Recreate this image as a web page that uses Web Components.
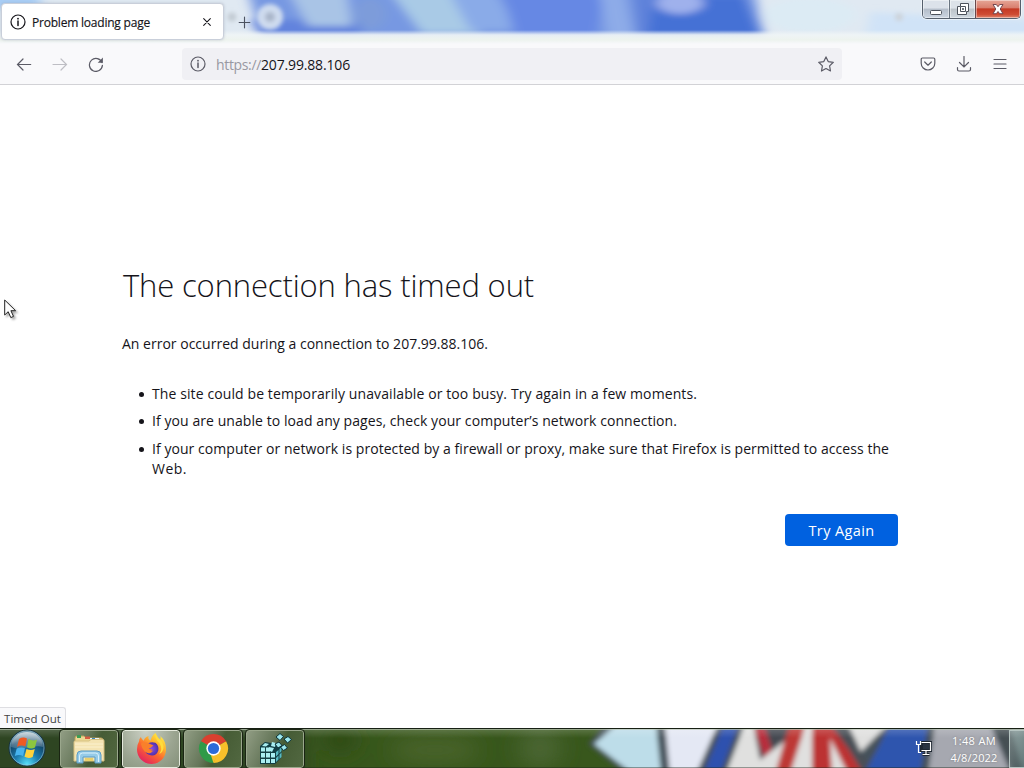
<!DOCTYPE html>
<html lang="en">
<head>
<meta charset="utf-8">
<title>Problem loading page</title>
<style>
html,body{margin:0;height:100%;overflow:hidden;background:#fff;font-family:"Open Sans","Noto Sans",sans-serif}
</style>
</head>
<body>
<desktop-screen></desktop-screen>
<script>
const define = (name, html, after) => customElements.define(name, class extends HTMLElement {
  constructor() {
    super();
    const t = document.createElement('template');
    t.innerHTML = html;
    this.attachShadow({mode: 'open'}).append(t.content.cloneNode(true));
  }
  connectedCallback() { if (after) after.call(this); }
});

// Single line of text, tracked so that it fills the width given in "w".
define('fit-text', `<style>:host{display:block;white-space:nowrap;width:max-content}span{display:inline-block}</style><span><slot></slot></span>`, function () {
  const span = this.shadowRoot.querySelector('span');
  const target = +this.getAttribute('w');
  const n = this.textContent.length;
  const natural = span.getBoundingClientRect().width;
  if (target && n) span.style.letterSpacing = ((target - natural) / n) + 'px';
});

define('glass-backdrop', `<style>:host{display:block;position:absolute;inset:0;overflow:hidden}svg{display:block}</style>
<svg width="1024" height="44" viewBox="0 0 1024 44">
<defs><filter id="b" x="-5%" y="-50%" width="110%" height="200%"><feGaussianBlur stdDeviation="6 3"/></filter>
<filter id="s" x="-20%" y="-50%" width="140%" height="200%"><feGaussianBlur stdDeviation="2"/></filter>
<linearGradient id="f" x1="0" x2="0" y1="0" y2="1"><stop offset="0" stop-color="#f0f5f6" stop-opacity="0"/><stop offset=".35" stop-color="#f0f5f6" stop-opacity=".9"/><stop offset=".7" stop-color="#edf3ee"/><stop offset="1" stop-color="#f8f9fc"/></linearGradient></defs>
<rect width="1024" height="44" fill="#e0e9f2"/>
<g filter="url(#b)">
<rect x="-20" y="-10" width="60" height="18" fill="#a8cdf5"/>
<path d="M244-20H752L765 38H262Z" fill="#7798e2"/>
<path d="M250 20H360V38H262Z" fill="#6283dd"/>
<path d="M285-15H345L352 26H308Z" fill="#a9c4e6"/>
<ellipse cx="370" cy="14" rx="16" ry="16" fill="#7d9cda"/>
<path d="M385-15H445L480 33H422Z" fill="#a9cae6"/>
<path d="M445-15H490L520 30H470Z" fill="#8aabe8"/>
<path d="M500-15H606L596 36H515Z" fill="#6688e4"/>
<path d="M598-15H622L634 38H608Z" fill="#8eace8"/>
<path d="M632-15H650L660 36H638Z" fill="#5f82da"/>
<path d="M654-5H744L760 36H648Z" fill="#4571d5"/>
<ellipse cx="680" cy="3" rx="24" ry="11" fill="#9fb1ec"/>
<ellipse cx="810" cy="15" rx="46" ry="17" fill="#dcebf4"/>
<path d="M870 12L1040 20V40H865Z" fill="#d0e3f7"/>
</g>
<g filter="url(#s)"><circle cx="270" cy="17" r="13" fill="#cfdcef"/><circle cx="270" cy="17" r="5" fill="#a9b5c9"/><circle cx="232" cy="17" r="4.500" fill="#c2cbd3"/><circle cx="899" cy="17" r="4" fill="#cdd3da"/></g>
<rect y="30" width="1024" height="14" fill="url(#f)"/>
</svg>`);

define('window-controls', `<style>:host{position:absolute;right:3px;top:0;display:flex;height:18px;width:97px;border:1px solid #56606d;border-top:0;border-radius:0 0 5px 5px;overflow:hidden;box-shadow:0 0 0 1px #ffffff80}
div{display:flex;align-items:center;justify-content:center;box-shadow:inset 0 0 0 1px #ffffff70}
.m{width:26px;background:linear-gradient(#dce2ea 0 45%,#b4bdc9 50%,#cbd5e1);border-right:1px solid #697480}.m svg{margin-top:2px}.r{width:25px;background:linear-gradient(#dce2e8 0 45%,#bcc3c9 50%,#cfd8df);border-right:1px solid #69494c}.c{flex:1;background:linear-gradient(#e6a697,#d9806f 42%,#c43a24 50%,#cf4c33 80%,#df866c)}
svg{display:block}</style>
<div class="m"><svg width="14" height="14" viewBox="0 0 14 14"><rect x="1.5" y="7.5" width="11" height="4" rx="1" fill="#fff" stroke="#4c525b"/></svg></div>
<div class="r"><svg width="14" height="14" viewBox="0 0 14 14"><path d="M4.5 1.5H12.5V9.500H10.500V12.500H1.500V4.500H4.500Z" fill="#fff" stroke="#4c525b"/><path d="M4.500 4.500H9.500V9.500H4.500Z" fill="#fff" stroke="#4c525b"/><path d="M6 6h2v2H6z" fill="#6e747c"/></svg></div>
<div class="c"><svg width="14" height="14" viewBox="0 0 14 14"><path d="M2 2.500H5.300L7 4.700 8.700 2.500H12L9.200 7 12 11.700H8.700L7 9.500 5.300 11.700H2L4.800 7Z" fill="#fff" stroke="#693c45" stroke-width=".9"/></svg></div>`);

const icons = {
  info: '<circle cx="8" cy="8" r="7"/><path d="M8 7v4.500" stroke-width="1.500"/><circle cx="8" cy="4.700" r=".9" fill="currentColor" stroke="none"/>',
  close: '<path d="M4.200 4.200l7.600 7.600M11.800 4.200l-7.600 7.600"/>',
  plus: '<path d="M8 2.300v11.400M2.300 8h11.400"/>',
  back: '<path d="M14.700 8.500H1.500M7 3L1.500 8.500 7 14"/>',
  forward: '<path d="M1 8.500h13.500M9 3L14.500 8.500 9 14"/>',
  reload: '<path d="M14 6.600A6.500 6.500 0 1 0 14.400 9.400"/><path d="M14.900 1.600v5.200H9.700z" fill="currentColor" stroke="none"/>',
  star: '<path d="M8 .9l2.200 4.700 5.100.7-3.700 3.600.9 5.100L8 12.500 3.500 15l.9-5.100L.7 6.300l5.100-.7z" stroke-linejoin="round"/>',
  pocket: '<path d="M2.400 2h11.200c.7 0 1.200.5 1.200 1.200v4A6.800 6.800 0 0 1 1.200 7.200v-4C1.200 2.500 1.700 2 2.400 2zM4.700 6L8 9.200 11.300 6" stroke-linejoin="round"/>',
  download: '<path d="M8 .5v10.300M3.500 6.500L8 10.900l4.500-4.400M1.500 11.500v2c0 .9.600 1.500 1.500 1.500h10c.9 0 1.500-.6 1.500-1.500v-2"/>',
  menu: '<path d="M2 3.500h12M2 8h12M2 12.500h12"/>'
};
define('line-icon', `<style>:host{display:block;width:16px;height:16px;flex:none}svg{display:block;width:100%;height:100%;fill:none;stroke:currentColor;stroke-width:1.200;stroke-linecap:round}</style><svg viewBox="0 0 16 16"></svg>`, function () {
  this.shadowRoot.querySelector('svg').innerHTML = icons[this.getAttribute('name')];
});

define('tab-strip', `<style>:host{display:flex;position:relative;height:44px;box-sizing:border-box;padding:3px 0 0 1px;align-items:flex-start}
.tab{position:relative;display:flex;align-items:center;box-sizing:border-box;width:223px;height:37px;padding:0 9px 0 8px;background:#fff;border-radius:4px;border:1px solid #c9cfda;box-shadow:0 0 3px #8089a060;color:#15141a;font-size:12px;line-height:18px}
fit-text{margin:3px 0 0 6px;flex:1;-webkit-text-stroke:.15px}.x{width:14px;height:14px}.plus{position:relative;margin:12px 0 0 13px;color:#4c5361;width:15px;height:15px}</style>
<glass-backdrop></glass-backdrop>
<div class="tab"><line-icon name="info"></line-icon><fit-text w="118">Problem loading page</fit-text><line-icon class="x" name="close"></line-icon></div>
<line-icon class="plus" name="plus"></line-icon><window-controls></window-controls>`);

define('nav-bar', `<style>:host{display:flex;align-items:center;height:40px;box-sizing:border-box;background:#f9f9fb;padding:0 16px;box-shadow:0 1px #d2d2d6;color:#5b5b66;position:relative}
.url{display:flex;align-items:center;box-sizing:border-box;height:32px;margin-left:78px;padding:0 8px;width:660px;background:#f0f0f4;border-radius:4px;font-size:14px;line-height:20px}
.f{margin-left:20px;color:#bebec4}.r{margin-left:20px}.url fit-text{margin:2px 0 0}.p{margin-left:10px!important;color:#9898a2}.h{color:#15141a}.s{margin-left:auto}.k{margin-left:78px}.d{margin:0 20px}</style>
<line-icon name="back"></line-icon><line-icon class="f" name="forward"></line-icon><line-icon class="r" name="reload"></line-icon>
<div class="url"><line-icon name="info"></line-icon><fit-text class="p" w="45">https://</fit-text><fit-text class="h" w="89">207.99.88.106</fit-text><line-icon class="s" name="star"></line-icon></div>
<line-icon class="k" name="pocket"></line-icon><line-icon class="d" name="download"></line-icon><line-icon name="menu"></line-icon>`);

define('error-page', `<style>:host{display:block;flex:1;box-sizing:border-box;padding:177px 126px 0 122px;color:#15141a;font-size:14px;line-height:20px;background:#fff}
h1{margin:0;padding-left:1px;font-size:31px;font-weight:300;line-height:48px}.intro{margin-top:25px}
ul{margin:30px 0 0;padding:0 0 0 30px;list-style:none;display:flex;flex-direction:column}
li{position:relative}li+li{margin-top:7px}li+li+li{margin-top:8px}li::before{content:"";position:absolute;left:-13px;top:8px;width:5px;height:5px;border-radius:50%;background:#15141a}
footer{display:flex;justify-content:flex-end;margin-top:35px}button{font:14.500px/20px "Open Sans","Noto Sans",sans-serif;color:#fff;background:#0061e0;border:0;border-radius:4px;width:113px;height:32px;padding:1px 0 0;display:flex;justify-content:center;align-items:center}</style>
<h1><fit-text w="411">The connection has timed out</fit-text></h1>
<fit-text class="intro" w="366">An error occurred during a connection to 207.99.88.106.</fit-text>
<ul><li><fit-text w="545">The site could be temporarily unavailable or too busy. Try again in a few moments.</fit-text></li>
<li><fit-text w="525">If you are unable to load any pages, check your computer’s network connection.</fit-text></li>
<li><fit-text w="737">If your computer or network is protected by a firewall or proxy, make sure that Firefox is permitted to access the</fit-text><fit-text w="35">Web.</fit-text></li></ul>
<footer><button><fit-text w="66">Try Again</fit-text></button></footer>`);

define('status-tip', `<style>:host{position:absolute;left:0;bottom:0;box-sizing:border-box;height:21px;width:66px;padding:2px 0 0 4px;background:#f9f9fb;border:1px solid #dedee2;border-left:0;border-bottom:0;border-radius:0 3px 0 0;font-size:11.500px;line-height:18px;color:#444}</style><fit-text w="57">Timed Out</fit-text>`);

define('mouse-pointer', `<style>:host{position:absolute;left:4px;top:299px;filter:drop-shadow(2px 2px 1px #0005)}svg{display:block}</style><svg width="13" height="20" viewBox="0 0 13 20"><path d="M.7 1V16L4.200 12.700 6.800 18.600 9.500 17.400 6.900 11.700H11.600Z" fill="#fff" stroke="#222"/></svg>`);

define('start-orb', `<style>:host{display:block;width:38px;height:38px;margin-left:8px}svg{display:block}</style><svg width="38" height="38" viewBox="0 0 38 38">
<defs><radialGradient id="o" cx=".5" cy=".95" r=".95"><stop offset="0" stop-color="#57e0fb"/><stop offset=".35" stop-color="#1d7db0"/><stop offset=".7" stop-color="#124567"/><stop offset="1" stop-color="#6d94a8"/></radialGradient><linearGradient id="g" x1="0" x2="0" y1="0" y2="1"><stop offset="0" stop-color="#fff" stop-opacity=".7"/><stop offset="1" stop-color="#fff" stop-opacity=".15"/></linearGradient></defs>
<circle cx="19" cy="19" r="18" fill="url(#o)" stroke="#16303e"/><circle cx="19" cy="19" r="17" fill="none" stroke="#9ac8d8" stroke-opacity=".6"/><path d="M3 18C3 9 10 3 19 3S35 9 35 18C27 15 14 22 3 18Z" fill="url(#g)"/>
<path d="M11 10Q15 7.500 19 9.500L17.300 17.500Q13 15.500 9 18Z" fill="#ee5a24"/><path d="M20.500 10Q25 12.500 29 10.500L27 18.500Q23 20.500 19 18.200Z" fill="#8cc63f"/><path d="M8.700 19.500Q13 17.500 17 19.200L15 27Q11 25 6.800 27Z" fill="#47b3ee"/><path d="M18.500 20Q23 22 26.800 20L24.700 28Q20.500 30 16.500 27.800Z" fill="#ffd23c"/></svg>`);

define('task-button', `<style>:host{display:flex;box-sizing:border-box;width:58px;height:38px;align-items:center;justify-content:center;border:1px solid #9aa78c;outline:1px solid #1a2513;border-radius:3px;background:linear-gradient(115deg,#919d84,#66775a 40%,#465c35 58%,#526841)}:host([active]){background:radial-gradient(ellipse at 40% 0,#cbd0c4,#9ba591 60%,#85917a);border-color:#e4e9dc}</style><slot></slot>`);

define('folder-icon', `<style>:host,svg{display:block}</style><svg width="34" height="30" viewBox="0 0 34 30"><path d="M3 4Q3 2 5 2H12L14 4H29Q31 4 31 6V26H3Z" fill="#ecd793" stroke="#b99f5c"/><path d="M5 1h4v3H5z" fill="#3d9c54"/><path d="M13 2.500h5v2.500h-5z" fill="#d65d42"/><path d="M18 4h9v2h-9z" fill="#eef4f6"/><path d="M20 4h3v2h-3z" fill="#3b86bb"/><path d="M2 8Q2 7 3 7H17L19 5.500H31Q32 5.500 32 7V27H2Z" fill="#f4e4b3" stroke="#d6c182"/><path d="M3 10h28M3 13h28" stroke="#fbf1ce"/><path d="M5 29V21Q5 17 9 17H25Q29 17 29 21V29H23V23H11V29Z" fill="#96cbe8" stroke="#5b9bc4"/><path d="M7.500 28v-6q0-3 3-3h13q3 0 3 3v6" fill="none" stroke="#d9f1fc"/><path d="M13 24h8v3h-8z" fill="#ead06c"/></svg>`);

define('firefox-icon', `<style>:host,svg{display:block}</style><svg width="31" height="31" viewBox="0 0 32 32"><defs><linearGradient id="a" x1=".85" y1=".05" x2=".25" y2=".95"><stop offset="0" stop-color="#fff04a"/><stop offset=".3" stop-color="#ffb52c"/><stop offset=".6" stop-color="#fb682f"/><stop offset="1" stop-color="#e4245e"/></linearGradient><radialGradient id="p"><stop offset="0" stop-color="#8a50e0"/><stop offset="1" stop-color="#5130ad"/></radialGradient></defs>
<path d="M3 9Q3 6 5 4Q6 7 8 8Q9 4 13 3Q12 6 15 8Q16 3 20 0Q21 4 25 7Q26 4 25 3Q31 8 31 17A15 15 0 1 1 1 17Q1 12 3 9Z" fill="url(#a)"/><path d="M10 13Q14 8 20 10Q24 13 23 18Q21 24 15 23Q10 22 9 17Q14 21 17 17Q13 17 10 13Z" fill="url(#p)"/><path d="M5 11Q9 8 14 11L18 13Q15 16 13 16Q14 19 18 18Q14 23 9 19Q6 16 5 11Z" fill="#f9802b"/><path d="M20 0Q19 6 24 10Q28 16 24 22Q31 18 27 9Q22 5 20 0Z" fill="#ffdc3c"/></svg>`);

define('chrome-icon', `<style>:host,svg{display:block}</style><svg width="31" height="31" viewBox="-16 -16 32 32"><path d="M0 0L-13-7.500A15 15 0 0 1 13-7.500Z" fill="#d9402f"/><path d="M0 0L13-7.500A15 15 0 0 1 0 15L4 5Z" fill="#f7c02a"/><path d="M0 0L0 15A15 15 0 0 1-13-7.500L-6 3Z" fill="#2f9a48"/><path d="M0-7H13.300L13-7.500H0Z" fill="#d9402f"/><path d="M-6.100 3.500L-13-7.500 0 0Z" fill="#2f9a48"/><path d="M6.100 3.500L0 15-3 6Z" fill="#f7c02a"/><circle r="7.400" fill="#fff"/><circle r="5.800" fill="#2c6bd8"/></svg>`);

define('regedit-icon', `<style>:host,svg{display:block}</style><svg width="34" height="33" viewBox="0 0 34 33"><path d="M2 14L7 10 20 12 24 15 23 26 17 32H2Z" fill="#123f45"/><g fill="#a9eef2"><path d="M3 15.500h4v4H3zM8 15.500h4v4H8zM3 21h4v4.500H3zM8 21h4v4.500H8zM13 21h4v4.500h-4zM3 27h4v4H3zM8 27h4v4H8zM13 27h4v4h-4z"/><path d="M4 14l3-3 4 1-3 2.500zM14 10l4 1-1 4-4-1zM11 15l5 1-2 4-2-1z"/></g><g fill="#58b9c2"><path d="M18 20l2.500-2v4L18 24.500zM21.500 17l2-2v4l-2 2.500zM18 26l2.500-2.500v4L18 30z M21.500 22.500l2-2v4.500l-2 2z"/></g><g fill="#9be6eb" stroke="#0b3238"><path d="M18 5l4-3.500 3.500 3L22 8.500zM26 7l4-2.500 3.500 3-4 3.500zM22.500 15l4-2.500 3 3.500-4 2.500zM17 12l4-2 3 3.500-4 2.500z"/></g></svg>`);

define('taskbar-backdrop', `<style>:host{position:absolute;inset:0;overflow:hidden}svg{display:block}</style><svg width="1024" height="40" viewBox="0 0 1024 40"><defs><filter id="q" x="-5%" y="-40%" width="110%" height="180%"><feGaussianBlur stdDeviation="2.500"/></filter><filter id="w" x="-10%" y="-80%" width="120%" height="260%"><feGaussianBlur stdDeviation="10"/></filter><linearGradient id="t" x1="0" x2="0" y1="0" y2="1"><stop offset="0" stop-color="#fff" stop-opacity=".2"/><stop offset=".25" stop-color="#fff" stop-opacity="0"/></linearGradient></defs>
<rect width="1024" height="40" fill="#38571c"/>
<g filter="url(#w)"><rect x="-30" y="-30" width="335" height="100" fill="#2e4520"/><ellipse cx="435" cy="22" rx="45" ry="13" fill="#48642b"/><ellipse cx="540" cy="20" rx="22" ry="20" fill="#4a6532"/><ellipse cx="340" cy="12" rx="18" ry="12" fill="#2d4919"/></g>
<g filter="url(#q)"><path d="M588 16L606-5H1040V50H630Z" fill="#45515a"/><path d="M594 16L616-3H656L661 46H633Z" fill="#bddde9"/><path d="M665-4H718L696 46H670Z" fill="#e4e8f4"/><path d="M724-4H739L720 46H703Z" fill="#2f51af"/><path d="M745-4H888L850 35 865 48H725Z" fill="#e0e0df"/><path d="M753-4H806L760 32Z" fill="#454851"/><path d="M754 0L764 29 772 22 764-3Z" fill="#b92e3c"/><path d="M790-4H806L790 46H775L783 18Z" fill="#bd3734"/><path d="M812-4H834L868 46H848L830 10 832 46H812Z" fill="#bc3032"/><path d="M830-4H848L860 22 875 46H863L849 22Z" fill="#485057"/><path d="M890-4H928L920 46H864L878 20Z" fill="#2f54ae"/><path d="M935-4H990L1011 46H928Z" fill="#a6a8b0"/><path d="M993-4H1007L1030 46H1012Z" fill="#454f53"/><path d="M1010-4H1030V46H1024Z" fill="#6f8384"/></g>
<rect width="1024" height="40" fill="url(#t)"/><rect width="1024" height="1" fill="#172014"/><rect y="1" width="1024" height="1" fill="#bdc8b5" opacity=".65"/><rect y="39" width="1024" height="1" fill="#1c2618" opacity=".4"/></svg>`);

define('system-tray', `<style>:host{display:flex;margin-left:auto;height:40px;align-items:center;color:#fff}svg{display:block;margin-right:12px}.clock{display:flex;flex-direction:column;align-items:center;width:60px;font-size:11px;line-height:17px;padding-top:1px;margin-right:5px;text-shadow:0 0 2px #5558}.peek{box-sizing:border-box;width:15px;height:38px;margin-top:2px;border:1px solid #b5c4c1;border-right:0;background:linear-gradient(120deg,#c4d4d060,#536b6b60)}</style>
<svg width="17" height="16" viewBox="0 0 17 16"><path d="M6.500 2.500H15.500V10.500H6.500ZM11 10.500V14M7.500 14.500H14.500" fill="#2a3441" stroke="#202832" stroke-width="3"/><path d="M6.500 2.500H15.500V10.500H6.500M11 10.500V14M7.500 14.500H14.500M1.500 1V4.500H5.500V1M3.500 5V12.500H6" fill="none" stroke="#fff" stroke-width="1.200"/></svg>
<div class="clock"><fit-text w="44">1:48 AM</fit-text><fit-text w="47">4/8/2022</fit-text></div><div class="peek"></div>`);

define('task-bar', `<style>:host{display:flex;position:relative;height:40px;align-items:center}.buttons{display:flex;gap:4px;margin:1px 0 0 14px;position:relative}start-orb,system-tray{position:relative}</style>
<taskbar-backdrop></taskbar-backdrop><start-orb></start-orb><div class="buttons"><task-button><folder-icon></folder-icon></task-button><task-button active><firefox-icon></firefox-icon></task-button><task-button><chrome-icon></chrome-icon></task-button><task-button><regedit-icon></regedit-icon></task-button></div><system-tray></system-tray>`);

define('desktop-screen', `<style>:host{display:flex;flex-direction:column;width:1024px;height:768px;overflow:hidden;position:relative}.window{display:flex;flex-direction:column;height:728px;position:relative}</style>
<div class="window"><tab-strip></tab-strip><nav-bar></nav-bar><error-page></error-page><status-tip></status-tip></div><task-bar></task-bar><mouse-pointer></mouse-pointer>`);
</script>
</body>
</html>
